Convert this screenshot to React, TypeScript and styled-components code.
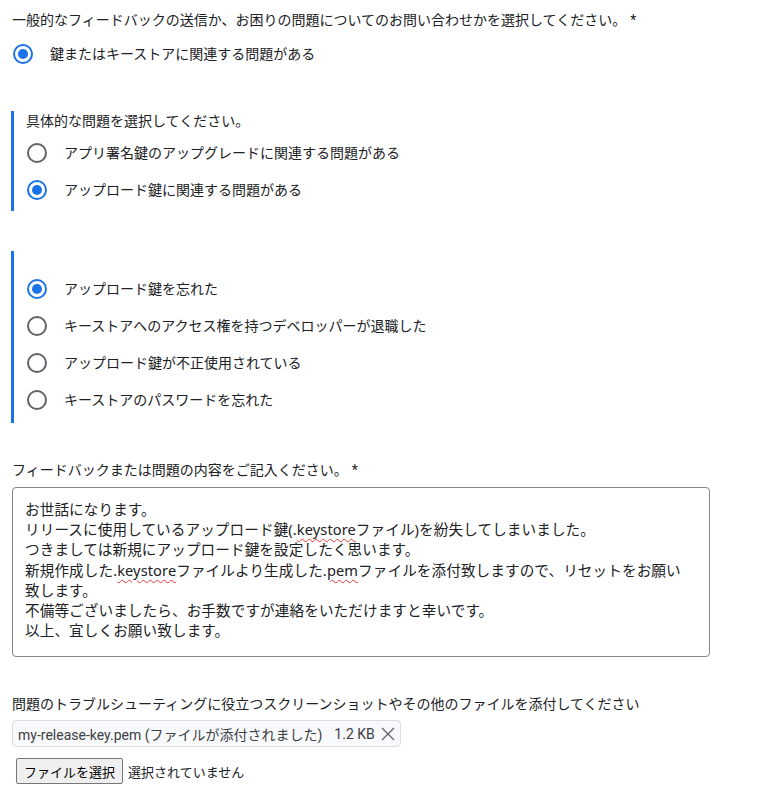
import styled, { createGlobalStyle } from "styled-components";

const GlobalStyle = createGlobalStyle`
  html, body {
    margin: 0;
    padding: 0;
    background: #ffffff;
  }
  body {
    font-family: Roboto, "Noto Sans CJK JP", "Noto Sans", sans-serif;
    font-size: 14px;
    color: #202124;
  }
`;

const Page = styled.div`
  display: flex;
  flex-direction: column;
  padding: 10px 12px 12px 12px;
  width: 759px;
  box-sizing: border-box;
`;

const Question = styled.div`
  line-height: 20px;
  white-space: nowrap;
`;

const Required = styled.span`
  margin-left: 4px;
`;

const RadioList = styled.div<{ $top?: number }>`
  display: flex;
  flex-direction: column;
  margin-top: ${({ $top }) => $top ?? 0}px;
`;

const RadioRow = styled.label`
  display: flex;
  align-items: center;
  gap: 17px;
  height: 37px;
  line-height: 20px;
  cursor: pointer;
`;

const RadioCircle = styled.span<{ $checked?: boolean }>`
  position: relative;
  width: 20px;
  height: 20px;
  margin-left: 1px;
  flex-shrink: 0;
  box-sizing: border-box;
  border-radius: 50%;
  border: 2px solid ${({ $checked }) => ($checked ? "#1a73e8" : "#5f6368")};

  &::after {
    content: "";
    display: ${({ $checked }) => ($checked ? "block" : "none")};
    position: absolute;
    left: 3px;
    top: 3px;
    width: 10px;
    height: 10px;
    border-radius: 50%;
    background: #1a73e8;
  }
`;

const SubSection = styled.div<{ $top: number; $padTop: number; $padBottom: number }>`
  display: flex;
  flex-direction: column;
  margin-top: ${({ $top }) => $top}px;
  margin-left: -1px;
  border-left: 3px solid #1a73e8;
  padding: ${({ $padTop }) => $padTop}px 0 ${({ $padBottom }) => $padBottom}px 12px;
`;

const SubTitle = styled.div`
  line-height: 20px;
  margin-bottom: 3px;
`;

const FieldLabel = styled.div<{ $top: number }>`
  margin-top: ${({ $top }) => $top}px;
  line-height: 20px;
  white-space: nowrap;
`;

const TextBox = styled.div`
  margin-top: 7px;
  width: 698px;
  height: 170px;
  box-sizing: border-box;
  border: 1px solid #80868b;
  border-radius: 4px;
  padding: 11px 12px 0 12px;
  font-family: "Noto Sans", "Noto Sans CJK JP", sans-serif;
  font-size: 14.6px;
  letter-spacing: 0.1px;
  line-height: 20.2px;
  white-space: nowrap;
`;

const Spell = styled.span`
  text-decoration: underline wavy #e53935;
  text-decoration-thickness: 1px;
  text-underline-offset: 3px;
`;

const AttachChip = styled.div`
  margin-top: 6px;
  align-self: flex-start;
  display: flex;
  align-items: center;
  height: 27px;
  box-sizing: border-box;
  padding: 0 4px 0 5px;
  background: #f8f9fa;
  border: 1px solid #dadce0;
  border-radius: 4px;
  white-space: nowrap;
  color: #3c4043;
`;

const ChipSize = styled.span`
  margin-left: 12px;
`;

const RemoveButton = styled.button`
  display: flex;
  align-items: center;
  justify-content: center;
  border: none;
  background: none;
  padding: 0;
  margin-left: 5px;
  width: 16px;
  height: 16px;
  cursor: pointer;
`;

const FilePickerRow = styled.div`
  margin-top: 11px;
  margin-left: 4px;
  display: flex;
  align-items: center;
  gap: 5px;
  white-space: nowrap;
`;

const FileButton = styled.button`
  height: 26px;
  padding: 0 7px;
  font-family: inherit;
  font-size: 13px;
  color: #000000;
  background: #efefef;
  border: 1px solid #767676;
  border-radius: 2px;
  cursor: pointer;
`;

const NoFile = styled.span`
  font-size: 13px;
  color: #202124;
`;

type Option = { label: string; checked?: boolean };

function RadioGroup({ options, top }: { options: Option[]; top?: number }) {
  return (
    <RadioList $top={top}>
      {options.map((o) => (
        <RadioRow key={o.label}>
          <RadioCircle $checked={o.checked} />
          <span>{o.label}</span>
        </RadioRow>
      ))}
    </RadioList>
  );
}

export default function App() {
  return (
    <>
      <GlobalStyle />
      <Page>
        <Question>
          一般的なフィードバックの送信か、お困りの問題についてのお問い合わせかを選択してください。
          <Required>*</Required>
        </Question>
        <RadioGroup top={5} options={[{ label: "鍵またはキーストアに関連する問題がある", checked: true }]} />

        <SubSection $top={39} $padTop={0} $padBottom={3}>
          <SubTitle>具体的な問題を選択してください。</SubTitle>
          <RadioGroup
            options={[
              { label: "アプリ署名鍵のアップグレードに関連する問題がある" },
              { label: "アップロード鍵に関連する問題がある", checked: true },
            ]}
          />
        </SubSection>

        <SubSection $top={40} $padTop={19} $padBottom={5}>
          <RadioGroup
            options={[
              { label: "アップロード鍵を忘れた", checked: true },
              { label: "キーストアへのアクセス権を持つデベロッパーが退職した" },
              { label: "アップロード鍵が不正使用されている" },
              { label: "キーストアのパスワードを忘れた" },
            ]}
          />
        </SubSection>

        <FieldLabel $top={37}>
          フィードバックまたは問題の内容をご記入ください。<Required>*</Required>
        </FieldLabel>
        <TextBox>
          お世話になります。
          <br />
          リリースに使用しているアップロード鍵(.<Spell>keystore</Spell>ファイル)を紛失してしまいました。
          <br />
          つきましては新規にアップロード鍵を設定したく思います。
          <br />
          新規作成した.<Spell>keystore</Spell>ファイルより生成した.<Spell>pem</Spell>
          ファイルを添付致しますので、リセットをお願い
          <br />
          致します。
          <br />
          不備等ございましたら、お手数ですが連絡をいただけますと幸いです。
          <br />
          以上、宜しくお願い致します。
        </TextBox>

        <FieldLabel $top={37}>
          問題のトラブルシューティングに役立つスクリーンショットやその他のファイルを添付してください
        </FieldLabel>
        <AttachChip>
          <span>my-release-key.pem (ファイルが添付されました)</span>
          <ChipSize>1.2 KB</ChipSize>
          <RemoveButton aria-label="削除">
            <svg width="14" height="14" viewBox="0 0 14 14">
              <path d="M1 1 L13 13 M13 1 L1 13" stroke="#5f6368" strokeWidth="1.3" fill="none" />
            </svg>
          </RemoveButton>
        </AttachChip>
        <FilePickerRow>
          <FileButton>ファイルを選択</FileButton>
          <NoFile>選択されていません</NoFile>
        </FilePickerRow>
      </Page>
    </>
  );
}
